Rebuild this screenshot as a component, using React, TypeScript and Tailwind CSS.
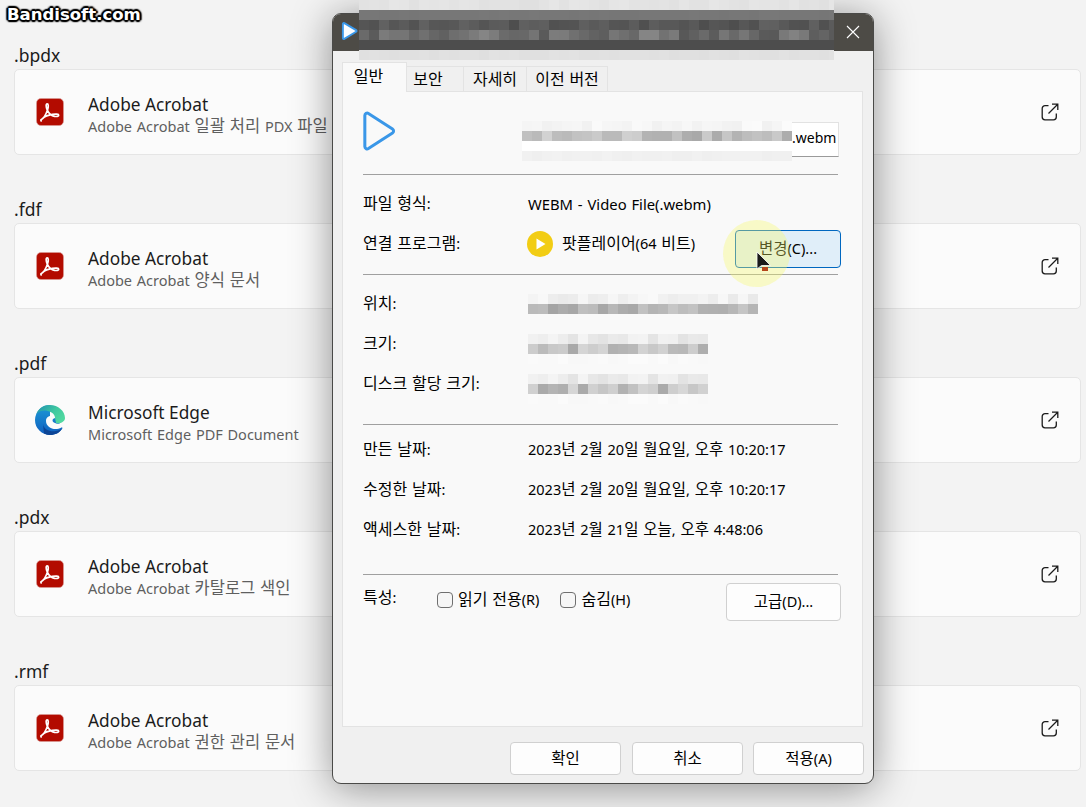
import React from "react";

const FONT = "font-['Noto_Sans','Noto_Sans_CJK_KR',sans-serif]";

function seq(seed: number, n: number, lo: number, hi: number): string[] {
  let s = seed;
  const out: string[] = [];
  for (let i = 0; i < n; i++) {
    s = (s * 9301 + 49297) % 233280;
    const v = Math.round(lo + (s / 233280) * (hi - lo));
    const h = v.toString(16).padStart(2, "0");
    out.push(`#${h}${h}${h}`);
  }
  return out;
}

function Mosaic({ rows, className = "" }: { rows: string[][]; className?: string }) {
  return (
    <div className={`flex flex-col ${className}`}>
      {rows.map((r, i) => (
        <div key={i} className="flex h-[10px]">
          {r.map((c, j) => (
            <div key={j} className="w-[10px] h-[10px] shrink-0" style={{ background: c }} />
          ))}
        </div>
      ))}
    </div>
  );
}

function T({ children, k = "text-[15.500px]" }: { children: string; k?: string }) {
  return (
    <>
      {children.split(/([가-힣]+)/).map((p, i) =>
        i % 2 === 1 ? (
          <span key={i} className={`${k} leading-none`}>{p}</span>
        ) : (
          <span key={i}>{p}</span>
        )
      )}
    </>
  );
}

const n = 48;
const titleRows = [
  seq(1, n, 0xe0, 0xe6),
  seq(2, n, 0x76, 0x78),
  seq(3, n, 0x4e, 0x62),
  seq(4, n, 0x58, 0x88),
  seq(5, n, 0x4d, 0x4d),
  seq(6, n, 0xdf, 0xe2),
];
const fileRows = [
  seq(7, 27, 0xf0, 0xfb),
  seq(8, 27, 0xa8, 0xd6),
  seq(9, 27, 0xff, 0xff),
  seq(10, 27, 0xef, 0xf2),
];
const locRows = [seq(11, 23, 0xe8, 0xfa), seq(12, 23, 0xa0, 0xc6)];
const sizeRows = [
  seq(13, 18, 0xe2, 0xf6),
  seq(14, 18, 0xa6, 0xd8),
  seq(15, 18, 0xf8, 0xfb),
];
const diskRows = [
  seq(13, 18, 0xe2, 0xf6),
  seq(16, 18, 0xa6, 0xd8),
  seq(15, 18, 0xf8, 0xfb),
];

function AcrobatIcon() {
  return (
    <svg width="28" height="28" viewBox="0 0 28 28">
      <rect x="0.500" y="0.500" width="27" height="27" rx="4.500" fill="#b30b00" stroke="#d9a09a" strokeWidth="0.600" />
      <path
        d="M5 21.800c2.200-1 5.200-5.800 6.800-10.800.7-2.400.7-5.200-.6-5.200-1.400 0-1.300 3.200 0 6 1.700 3.700 4.500 6.200 7.300 6.600 2 .3 4.200-.1 4.200-1.200 0-1.200-2.900-1.400-6.300-.8-3.500.6-7.600 2-9.700 3.900-1.500 1.400-2 2.500-1.700 2.500z"
        fill="none"
        stroke="#fff"
        strokeWidth="1.700"
      />
    </svg>
  );
}

function EdgeIcon() {
  return (
    <svg width="32" height="32" viewBox="0 0 32 32">
      <defs>
        <linearGradient id="edgeBlue" x1="0" y1="0" x2="0" y2="1">
          <stop offset="0" stopColor="#1d9ad6" />
          <stop offset="1" stopColor="#0f5fc0" />
        </linearGradient>
        <linearGradient id="edgeGreen" x1="0" y1="0" x2="1" y2="0.600">
          <stop offset="0" stopColor="#1f8fb0" />
          <stop offset="0.600" stopColor="#3fc8a0" />
          <stop offset="1" stopColor="#50d8a0" />
        </linearGradient>
      </defs>
      <path d="M16 1A15 15 0 0 0 16 31C21 31 25.500 29 28.500 24L22 14H16z" fill="url(#edgeBlue)" />
      <path d="M16 1C8 1 3.500 6 2.500 10C5 7 9 6 12 6.500C17 7.300 21 10 21 14L22 19C26 20 31 18 31 14C31 7 24 1 16 1Z" fill="url(#edgeGreen)" />
      <path d="M21 14C18 10.500 12 12 12 17C12 22 17 25.500 23 25C25 24.700 27 24 29 22.500L31 18C28 20 24 20.500 21 19C18 18 17.500 15 21 14Z" fill="#fbfbfb" />
      <path d="M9 20C10 26 16 28 22 27C25 26.500 27 25.500 28.500 24C25.500 29 21 31 16 31C14 31 12 30.500 10 29.500Z" fill="#0c4596" />
    </svg>
  );
}

function ExternalIcon() {
  return (
    <svg width="18" height="18" viewBox="0 0 18 18" fill="none" stroke="#1b1b1b" strokeWidth="1.300">
      <path d="M7.500 2.700H4A2.800 2.800 0 0 0 1.200 5.500V14A2.800 2.800 0 0 0 4 16.800h8.500a2.800 2.800 0 0 0 2.800-2.800v-3.500" />
      <path d="M11 1.200h5.800V7M16.500 1.500L7.500 10.500" />
    </svg>
  );
}

function Section({ ext, icon, name, desc }: { ext: string; icon: React.ReactNode; name: string; desc: string }) {
  return (
    <div className="h-[154px] flex flex-col">
      <div className="h-[26px] text-[17.500px] leading-[24px] text-[#1b1b1b]">{ext}</div>
      <div className="h-[86px] flex items-center bg-[#fbfbfb] border border-[#e5e5e5] rounded-[5px] pl-[19px] pr-[21px]">
        <div className="w-[32px] flex justify-center">{icon}</div>
        <div className="ml-[22px] flex-1 pt-[4px]">
          <div className="text-[17.300px] leading-[23px] text-[#1b1b1b]">{name}</div>
          <div className="text-[14.500px] leading-[20px] text-[#5f5f5f] [word-spacing:1px]"><T k="text-[16.500px]">{desc}</T></div>
        </div>
        <ExternalIcon />
      </div>
    </div>
  );
}

function Tab({ label, active, w }: { label: string; active?: boolean; w: string }) {
  return active ? (
    <div className={`${w} h-[30px] bg-[#f9f9f9] border border-b-0 border-[#e3e3e3] pr-[12px] text-center leading-[26px] text-black -mb-px z-10`}>
      <T k="text-[16px]">{label}</T>
    </div>
  ) : (
    <div className={`${w} h-[25px] bg-[#f0f0f0] border border-b-0 border-l-0 border-[#e3e3e3] text-center leading-[24px] text-black`}>
      <T k="text-[16px]">{label}</T>
    </div>
  );
}

function Row({ label, children }: { label: string; children: React.ReactNode }) {
  return (
    <div className="h-[40px] w-[478px] flex items-center text-black">
      <div className="w-[165px] shrink-0"><T k="text-[16px]">{label}</T></div>
      {children}
    </div>
  );
}

function Sep() {
  return <div className="h-px w-[475px] bg-[#a0a0a0]" />;
}

function Btn({ label, className = "" }: { label: string; className?: string }) {
  return (
    <div className={`flex items-center justify-center bg-[#fdfdfd] border border-[#d0d0d0] rounded-[4px] text-black ${className}`}>
      <T>{label}</T>
    </div>
  );
}

function Check({ label }: { label: string }) {
  return (
    <div className="flex items-center">
      <div className="w-[16px] h-[16px] rounded-[4px] border border-[#6f6f6f] bg-[#f6f6f6]" />
      <span className="ml-[5px] text-black"><T k="text-[16px]">{label}</T></span>
    </div>
  );
}

export default function App() {
  return (
    <div className={`relative w-[1086px] h-[807px] overflow-hidden bg-[#f3f3f3] ${FONT}`}>
      <div className="pt-[43px] pl-[14px] pr-[5px]">
        <Section ext=".bpdx" icon={<AcrobatIcon />} name="Adobe Acrobat" desc="Adobe Acrobat 일괄 처리 PDX 파일" />
        <Section ext=".fdf" icon={<AcrobatIcon />} name="Adobe Acrobat" desc="Adobe Acrobat 양식 문서" />
        <Section ext=".pdf" icon={<EdgeIcon />} name="Microsoft Edge" desc="Microsoft Edge PDF Document" />
        <Section ext=".pdx" icon={<AcrobatIcon />} name="Adobe Acrobat" desc="Adobe Acrobat 카탈로그 색인" />
        <Section ext=".rmf" icon={<AcrobatIcon />} name="Adobe Acrobat" desc="Adobe Acrobat 권한 관리 문서" />
      </div>

      <div className="absolute left-[7px] top-[3px] font-['DejaVu_Sans',sans-serif] font-bold text-[16.500px] leading-[24px] text-white [text-shadow:0_0_2px_#000,0_0_2px_#000,0_0_3px_#000,2px_0_1px_#000,-2px_0_1px_#000,0_2px_1px_#000,0_-2px_1px_#000,1px_1px_2px_#000,-1px_-1px_2px_#000,1px_-1px_2px_#000,-1px_1px_2px_#000]">
        Bandisoft.com
      </div>

      {/* Properties window */}
      <div className="absolute left-[332px] top-[13px] w-[542px] h-[771px] bg-[#f0f0f0] border border-[#4a4a48] rounded-[9px] overflow-hidden shadow-[0_4px_40px_rgba(0,0,0,0.42)] flex flex-col text-[14.500px] [word-spacing:1px]">
        <div className="h-[37px] shrink-0 bg-[#4d4b46] flex items-center justify-between pl-[8px] pr-[13px]">
          <svg className="-mt-[3px]" width="17" height="20" viewBox="0 0 18 20">
            <path d="M2 2.500v15a1 1 0 0 0 1.500.8l12.500-7.500a1 1 0 0 0 0-1.700L3.500 1.700A1 1 0 0 0 2 2.500z" fill="#fbfdff" stroke="#3a97e8" strokeWidth="2" />
          </svg>
          <svg className="-mt-[1px]" width="14" height="14" viewBox="0 0 14 14" stroke="#fff" strokeWidth="1.100">
            <path d="M1 1l12 12M13 1L1 13" />
          </svg>
        </div>

        <div className="flex-1 flex flex-col px-[9px]">
          <div className="h-[40px] flex items-end shrink-0">
            <Tab label="일반" active w="w-[65px]" />
            <div className="w-[57px] h-[25px] bg-[#f0f0f0] border border-b-0 border-l-0 border-[#e3e3e3] pr-[14px] text-center leading-[24px] text-black"><T k="text-[16px]">보안</T></div>
            <Tab label="자세히" w="w-[63px]" />
            <Tab label="이전 버전" w="w-[81px]" />
          </div>
          <div className="h-[636px] w-[521px] bg-[#f9f9f9] border border-[#e3e3e3] pl-[20px] shrink-0">
            <div className="h-[82px] flex items-start">
              <svg className="mt-[18px] -ml-[1px]" width="34" height="42" viewBox="0 0 36 44">
                <path d="M3 5.500v33a2.500 2.500 0 0 0 3.800 2.100l25.500-16.500a2.500 2.500 0 0 0 0-4.200L6.800 3.400A2.500 2.500 0 0 0 3 5.500z" fill="none" stroke="#3a97e8" strokeWidth="3.200" />
              </svg>
              <div className="ml-[126px] mt-[29px] flex">
                <Mosaic rows={fileRows} />
                <div className="w-[47px] h-[35px] mt-px bg-white border-r border-b border-t border-[#e2e2e2] border-b-[#9a9a9a] text-[14px] leading-[29px] text-black text-right pr-[3px]">
                  .webm
                </div>
              </div>
            </div>
            <Sep />
            <div className="pt-[9px]">
              <Row label="파일 형식:"><span className="text-[14.800px]">WEBM - Video File(.webm)</span></Row>
              <Row label="연결 프로그램:">
                <svg className="-ml-[1px] shrink-0" width="26" height="26" viewBox="0 0 26 26">
                  <circle cx="13" cy="13" r="13" fill="#f2cd14" />
                  <path d="M9.500 7.500v11l9-5.500z" fill="#fff" />
                </svg>
                <span className="ml-[9px] whitespace-nowrap"><T k="text-[16px]">팟플레이어(64 비트)</T></span>
                <div className="ml-auto mt-[10px] w-[106px] h-[38px] shrink-0 flex items-center justify-center bg-[#e0eef9] border border-[#0067c0] rounded-[4px]"><T>변경(C)...</T></div>
              </Row>
            </div>
            <div className="h-[10px]" />
            <Sep />
            <div className="pt-[9px]">
              <Row label="위치:"><Mosaic rows={locRows} /></Row>
              <Row label="크기:"><Mosaic rows={sizeRows} className="mt-[10px]" /></Row>
              <Row label="디스크 할당 크기:"><Mosaic rows={diskRows} className="mt-[10px]" /></Row>
            </div>
            <div className="h-[20px]" />
            <Sep />
            <div className="pt-[5px]">
              <Row label="만든 날짜:"><span><T>2023년 2월 20일 월요일, 오후 10:20:17</T></span></Row>
              <Row label="수정한 날짜:"><span><T>2023년 2월 20일 월요일, 오후 10:20:17</T></span></Row>
              <Row label="액세스한 날짜:"><span><T>2023년 2월 21일 오늘, 오후 4:48:06</T></span></Row>
            </div>
            <div className="h-[24px]" />
            <Sep />
            <div className="flex items-start pt-[8px] w-[478px]">
              <div className="w-[74px] text-black pt-[4px]"><T k="text-[16px]">특성:</T></div>
              <div className="flex gap-[21px] pt-[6px]">
                <Check label="읽기 전용(R)" />
                <Check label="숨김(H)" />
              </div>
              <Btn label="고급(D)..." className="ml-auto w-[115px] h-[38px]" />
            </div>
          </div>
          <div className="flex mt-[15px] pl-[168px]">
            <Btn label="확인" className="w-[111px] h-[33px]" />
            <Btn label="취소" className="ml-[11px] w-[111px] h-[33px]" />
            <Btn label="적용(A)" className="ml-[10px] w-[111px] h-[33px]" />
          </div>
        </div>
      </div>

      {/* Obscured title */}
      <Mosaic rows={titleRows} className="absolute left-[359px] top-0 w-[475px] overflow-hidden" />

      {/* Mouse highlight */}
      <div className="absolute left-[723px] top-[220px] w-[67px] h-[67px] rounded-full bg-[#f6f86a]/35" />
      <svg className="absolute left-[756px] top-[251px]" width="18" height="23" viewBox="0 0 18 23">
        <path d="M1 1v17l4.500-3.500h9z" fill="#1a1a1a" stroke="#fff" strokeWidth="0.800" />
        <rect x="6" y="16" width="6" height="4" fill="#b5461c" />
      </svg>
    </div>
  );
}
